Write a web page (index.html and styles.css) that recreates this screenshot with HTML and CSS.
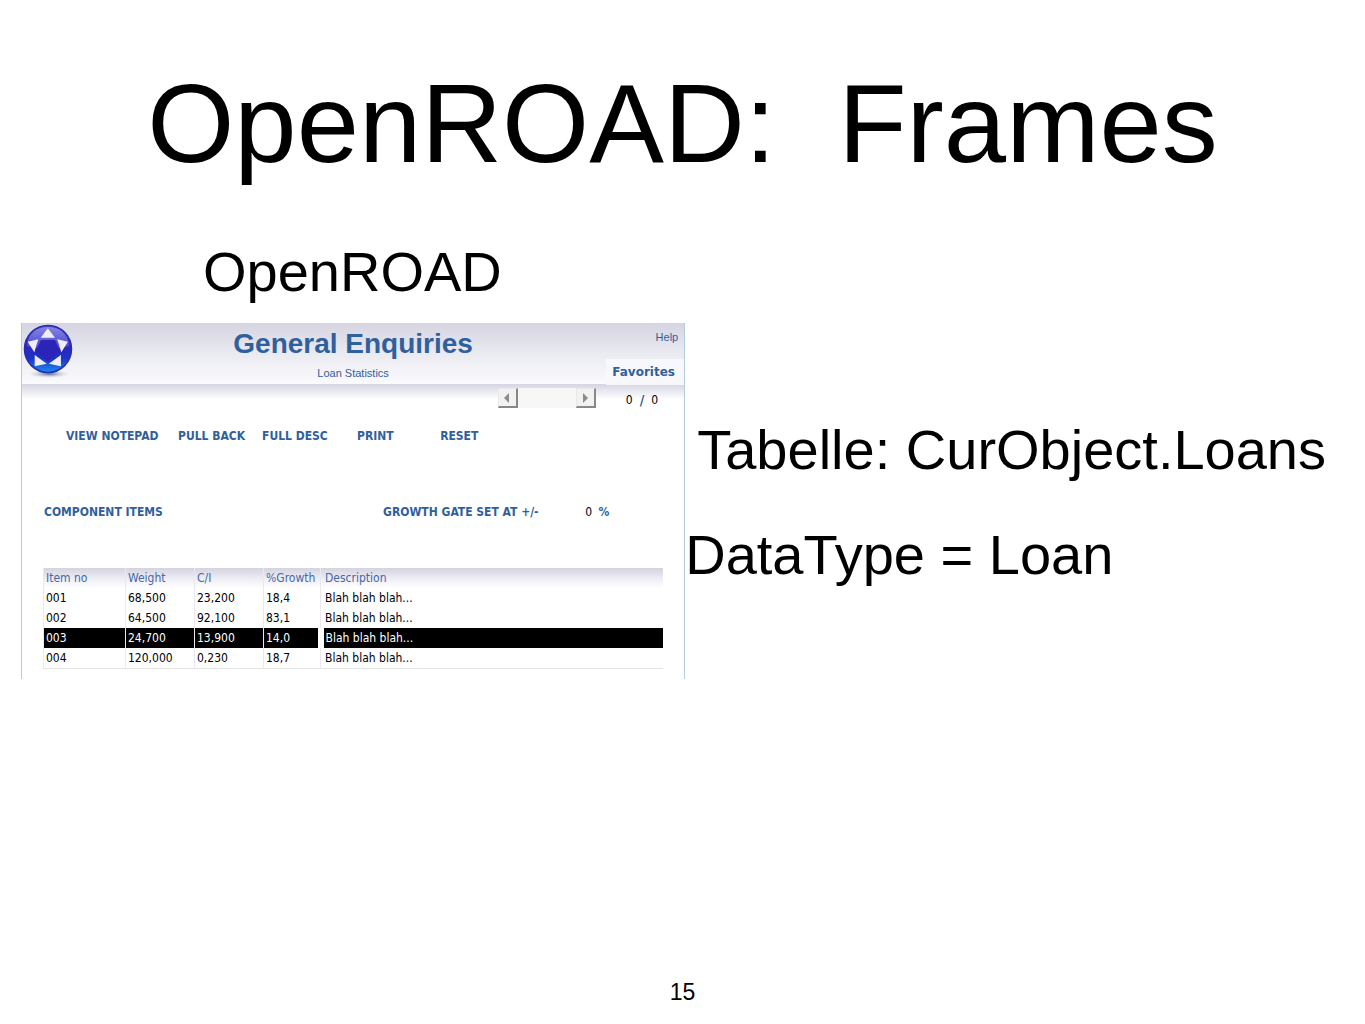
FILE: index.html
```html
<!DOCTYPE html>
<html lang="de">
<head>
    <meta charset="UTF-8">
    <meta name="viewport" content="width=device-width, initial-scale=1.0">
    <title>OpenROAD: Frames</title>
    <link rel="stylesheet" href="styles.css">
</head>
<body>

    <main class="slide">
        <h1>OpenROAD:&nbsp; Frames</h1>

        <div class="content">
            <section class="left">
                <h2>OpenROAD</h2>

                <!-- Application frame -->
                <div class="frame">
                    <header class="frame-header">
                        <svg class="logo" viewBox="0 0 52 56" aria-hidden="true">
                            <defs>
                                <linearGradient id="ball" x1="0" y1="0" x2="0" y2="1">
                                    <stop offset="0" stop-color="#5a5ad8"/>
                                    <stop offset="0.45" stop-color="#2c28b8"/>
                                    <stop offset="0.7" stop-color="#1c34c4"/>
                                    <stop offset="1" stop-color="#1a8cf0"/>
                                </linearGradient>
                                <linearGradient id="shine" x1="0" y1="0" x2="0" y2="1">
                                    <stop offset="0" stop-color="#b4b4f4"/>
                                    <stop offset="1" stop-color="#6464dc"/>
                                </linearGradient>
                                <radialGradient id="shadow">
                                    <stop offset="0" stop-color="#5c6c84"/>
                                    <stop offset="1" stop-color="#c8d4e4" stop-opacity="0"/>
                                </radialGradient>
                            </defs>
                            <ellipse cx="27" cy="51" rx="21" ry="4" fill="url(#shadow)"/>
                            <circle cx="26" cy="26" r="23.5" fill="url(#ball)" stroke="#2c28b0" stroke-width="1.5"/>
                            <path d="M5 23C6 10 15 4 26 4s20 6 21 19c-13 4-29 4-42 0z" fill="url(#shine)" opacity="0.5"/>
                            <path d="M19 17h14l5 11-12 11-12-11z" fill="#2c24b8"/>
                            <path d="M25.800 5.300l7.200 9.400H18.700zM5.700 18.700l10.600-2.400-4 13zM45.900 18.700l-10.600-2.400 4 13zM12.700 32l12 8.700-12 2.600zM38.900 32l-12 8.700 12 2.600z" fill="#eeeefa"/>
                        </svg>
                        <div class="frame-title">
                            <h3>General Enquiries</h3>
                            <p>Loan Statistics</p>
                        </div>
                        <nav class="frame-links">
                            <a href="#" class="help">Help</a>
                            <a href="#" class="favorites">Favorites</a>
                        </nav>
                    </header>

                    <div class="pager">
                        <div class="scrollbar">
                            <button type="button" aria-label="Previous">
                                <svg viewBox="0 0 8 10"><path d="M6 0v10L1 5z"/></svg>
                            </button>
                            <button type="button" aria-label="Next">
                                <svg viewBox="0 0 8 10"><path d="M2 0v10l5-5z"/></svg>
                            </button>
                        </div>
                        <div class="count"><span>0</span><b>/</b><span>0</span></div>
                    </div>

                    <div class="toolbar">
                        <button type="button">VIEW NOTEPAD</button>
                        <button type="button">PULL BACK</button>
                        <button type="button">FULL DESC</button>
                        <button type="button">PRINT</button>
                        <button type="button">RESET</button>
                    </div>

                    <div class="caption">
                        <b>COMPONENT ITEMS</b>
                        <b>GROWTH GATE SET AT +/-</b>
                        <span class="gate">0 <b>%</b></span>
                    </div>

                    <table class="items">
                        <colgroup>
                            <col class="col-item">
                            <col class="col-number">
                            <col class="col-number">
                            <col class="col-growth">
                            <col>
                        </colgroup>
                        <thead>
                            <tr><th>Item no</th><th>Weight</th><th>C/I</th><th>%Growth</th><th>Description</th></tr>
                        </thead>
                        <tbody>
                            <tr><td>001</td><td>68,500</td><td>23,200</td><td>18,4</td><td>Blah blah blah...</td></tr>
                            <tr><td>002</td><td>64,500</td><td>92,100</td><td>83,1</td><td>Blah blah blah...</td></tr>
                            <tr class="selected"><td>003</td><td>24,700</td><td>13,900</td><td>14,0</td><td>Blah blah blah...</td></tr>
                            <tr><td>004</td><td>120,000</td><td>0,230</td><td>18,7</td><td>Blah blah blah...</td></tr>
                        </tbody>
                    </table>
                </div>
            </section>

            <section class="notes">
                <p class="indent">Tabelle: CurObject.Loans</p>
                <p>DataType = Loan</p>
            </section>
        </div>

        <footer>15</footer>
    </main>

</body>
</html>
```
FILE: styles.css
```css
* {
    box-sizing: border-box;
}

body {
    margin: 0;
    font-family: "Liberation Sans", Arial, sans-serif;
    background: #fff;
    color: #000;
}

h1, h2, h3, p {
    margin: 0;
    font-weight: normal;
}

button {
    padding: 0;
    border: none;
    background: none;
    font: inherit;
    color: inherit;
    cursor: pointer;
}

a {
    color: inherit;
    text-decoration: none;
}

.slide {
    display: flex;
    flex-direction: column;
    min-height: 100vh;
    padding-top: 58px;
}

h1 {
    font-size: 112px;
    line-height: 132px;
    text-align: center;
}

.content {
    display: grid;
    grid-template-columns: 50.2% 1fr;
    margin-top: 50px;
}

.left {
    padding-left: 21px;
}

h2 {
    padding-left: 182px;
    font-size: 56px;
    line-height: 64px;
}

/* Application frame */
.frame {
    margin-top: 19px;
    padding-bottom: 10px;
    border: 1px solid #b4cce0;
    border-width: 0 1px;
    font-family: "DejaVu Sans Condensed", "DejaVu Sans", Tahoma, sans-serif;
    font-size: 12px;
    line-height: 20px;
}

.frame-header {
    display: grid;
    grid-template-columns: 78px 1fr 78px;
    height: 61px;
    background: linear-gradient(#d5d4e1, #e8e8f0 45%, #fbfbfd);
    color: #30609c;
}

.logo {
    width: 52px;
    height: 56px;
}

.frame-title {
    font-family: "Liberation Sans", Arial, sans-serif;
    text-align: center;
}

.frame-title h3 {
    padding-top: 4px;
    font-size: 28px;
    font-weight: bold;
    line-height: 34px;
}

.frame-title p {
    font-size: 11px;
    line-height: 24px;
}

.frame-links {
    display: flex;
    flex-direction: column;
    justify-content: space-between;
    padding-top: 4px;
}

.help {
    padding-right: 6px;
    font-family: "Liberation Sans", Arial, sans-serif;
    font-size: 11px;
    text-align: right;
}

.favorites {
    padding-left: 6px;
    background: #f8f8fc;
    font-family: "DejaVu Sans", Verdana, sans-serif;
    font-weight: bold;
    line-height: 26px;
}

.pager {
    display: flex;
    justify-content: flex-end;
    height: 34px;
    padding: 4px 26px 0 0;
    background: linear-gradient(#d5d4e1, #e8e8f0 20%, #fff 45%);
}

.scrollbar {
    display: flex;
    justify-content: space-between;
    width: 98px;
    height: 20px;
    margin-right: 30px;
    background: #f7f7f7;
}

.scrollbar button {
    width: 20px;
    border: 1px solid #e8e8e8;
    border-right: 2px solid #888;
    border-bottom: 2px solid #888;
    background: #f2f2f2;
    line-height: 0;
}

.scrollbar svg {
    width: 8px;
    height: 10px;
    fill: #8c8c8c;
}

.count {
    display: flex;
    gap: 7px;
    line-height: 24px;
}

.count b {
    font-size: 14px;
}

.count b, .gate b {
    color: #30609c;
}

.toolbar, .caption {
    display: grid;
    color: #30609c;
    font-weight: bold;
    white-space: nowrap;
}

.toolbar {
    grid-template-columns: 112fr 84fr 95fr 83fr 244fr;
    padding: 8px 0 0 44px;
}

.toolbar button {
    text-align: left;
}

.caption {
    grid-template-columns: 339fr 202fr 99fr;
    padding: 56px 0 0 22px;
}

.gate {
    color: #000;
    font-weight: normal;
}

.gate b {
    margin-left: 3px;
}

.items {
    width: calc(100% - 42px);
    margin: 46px 21px 0;
    border-collapse: collapse;
    border-bottom: 1px solid #e4e4e4;
    table-layout: fixed;
}

.col-item {
    width: 82px;
}

.col-number {
    width: 69px;
}

.col-growth {
    width: 57px;
}

.items th, .items td {
    height: 20px;
    padding: 0 0 0 2px;
    border-left: 1px solid #e8e8ee;
    text-align: left;
    white-space: nowrap;
}

.items th:last-child, .items td:last-child {
    padding-left: 4px;
}

.items thead {
    background: linear-gradient(#d3d2df, #ececf4 50%, #fff);
}

.items th {
    color: #4468a8;
    font-weight: normal;
}

.items .selected {
    background: #000;
    color: #fff;
}

.items .selected td:last-child {
    border-left: 6px solid #fff;
    padding-left: 2px;
}

/* Text beside the frame */
.notes {
    padding-top: 177px;
    font-size: 56px;
    line-height: 65px;
    white-space: nowrap;
}

.notes p {
    margin-bottom: 40px;
}

.notes .indent {
    padding-left: 12px;
}

footer {
    margin-top: auto;
    padding-bottom: 18px;
    font-size: 23px;
    line-height: 28px;
    text-align: center;
}
```
